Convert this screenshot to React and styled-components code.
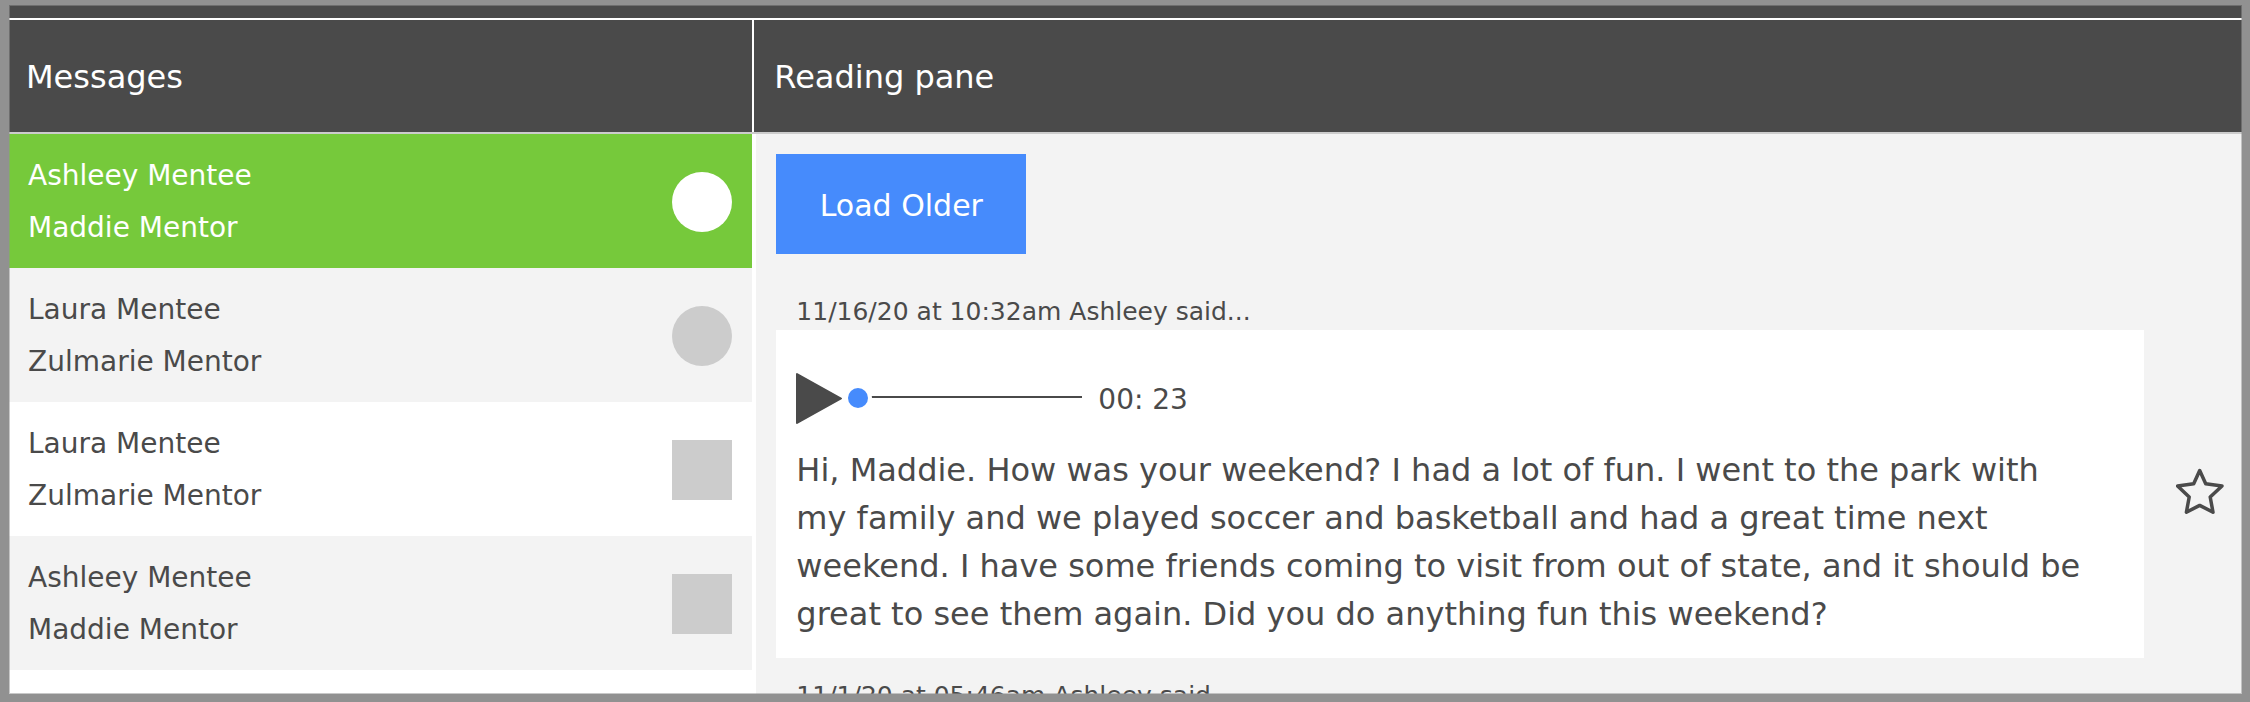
import React, { useState } from "react";
import styled, { createGlobalStyle, css } from "styled-components";

const ink = "#4a4a4a";
const blue = "#468bfc";
const green = "#76c93b";
const pale = "#f3f3f3";
const placeholder = "#cccccc";

const GlobalStyle = createGlobalStyle`
  *, *::before, *::after { box-sizing: border-box; }
  body {
    margin: 0;
    background: #919191;
    color: ${ink};
    font-family: Verdana, "DejaVu Sans", sans-serif;
  }
  button { font: inherit; color: inherit; border: 0; padding: 0; cursor: pointer; }
  h2, p, ul { margin: 0; padding: 0; }
`;

const Frame = styled.div`
  height: 100vh;
  padding: 5px 8px 8px 9px;
`;

const Window = styled.main`
  position: relative;
  height: 100%;
  display: flex;
  flex-direction: column;
  overflow: hidden;
  background: #ffffff;

  &::after {
    content: "";
    position: absolute;
    inset: 0;
    border: 1px solid rgba(145, 145, 145, 0.5);
    pointer-events: none;
  }
`;

const TopBar = styled.div`
  flex: none;
  height: 15px;
  background: ${ink};
  border-bottom: 2px solid #ffffff;
`;

const columns = css`
  display: grid;
  grid-template-columns: calc(100% / 3 + 1px) minmax(0, 1fr);
`;

const HeaderRow = styled.header`
  ${columns}
  flex: none;
  background: ${ink};
  border-bottom: 2px solid #cccccc;
`;

const PaneTitle = styled.h2`
  display: flex;
  align-items: center;
  height: 112px;
  padding-top: 2px;
  padding-left: ${(p) => (p.$divided ? 17 : 20)}px;
  border-right: ${(p) => (p.$divided ? "2px solid #ffffff" : "0")};
  color: #ffffff;
  font-size: 32px;
  font-weight: 400;
`;

const Body = styled.div`
  ${columns}
  flex: 1;
  min-height: 0;
`;

const ThreadList = styled.ul`
  list-style: none;
  overflow: hidden;
  border-right: 2px solid #ffffff;
`;

const ThreadItem = styled.li`
  background: #ffffff;
  &:nth-child(even) { background: ${pale}; }
`;

const ThreadButton = styled.button`
  display: flex;
  align-items: center;
  justify-content: space-between;
  width: 100%;
  padding: 16px 20px 14px 19px;
  background: ${(p) => (p.$active ? green : "transparent")};
  color: ${(p) => (p.$active ? "#ffffff" : ink)};
  text-align: left;
`;

const Names = styled.span`
  display: flex;
  flex-direction: column;
  font-size: 28px;
  line-height: 52px;
`;

const Avatar = styled.span`
  flex: none;
  width: 60px;
  height: 60px;
  border-radius: ${(p) => (p.$round ? "50%" : "0")};
  background: ${(p) => (p.$active ? "#ffffff" : placeholder)};
`;

const ReadingPane = styled.section`
  overflow: hidden;
  padding: 20px 0 0 20px;
  background: ${pale};
  border-left: 2px solid #ffffff;
`;

const LoadButton = styled.button`
  display: block;
  min-width: 250px;
  height: 100px;
  padding-top: 2px;
  margin-bottom: 40px;
  background: ${blue};
  color: #ffffff;
  font-size: 30px;
`;

const Message = styled.article`
  margin-bottom: 20px;
`;

const Meta = styled.p`
  padding-left: 20px;
  font-size: 25px;
  line-height: 36px;
`;

const MessageRow = styled.div`
  display: flex;
  align-items: center;
`;

const Card = styled.div`
  flex: 1;
  min-width: 0;
  padding: 42px 52px 20px 20px;
  background: #ffffff;
`;

const Player = styled.div`
  display: flex;
  align-items: center;
  margin-bottom: 22px;
`;

const PlayButton = styled.button`
  width: 48px;
  height: 52px;
  margin-right: 4px;
  background: none;
  svg { display: block; }
`;

const Seek = styled.input`
  appearance: none;
  width: 234px;
  height: 28px;
  margin: 0 16px 0 0;
  background: none;

  &::-webkit-slider-runnable-track {
    height: 20px;
    background: linear-gradient(${ink}, ${ink}) 0 8px / 100% 2px no-repeat;
  }
  &::-webkit-slider-thumb {
    appearance: none;
    width: 20px;
    height: 20px;
    border-radius: 50%;
    background: ${blue};
    box-shadow: 0 0 0 4px #ffffff;
  }
`;

const Duration = styled.span`
  padding-top: 2px;
  font-size: 28px;
`;

const MessageText = styled.p`
  font-size: 32px;
  line-height: 48px;
`;

const StarButton = styled.button`
  flex: none;
  width: 48px;
  height: 48px;
  margin: 0 18px 6px 32px;
  background: none;
  svg { display: block; }
`;

const threads = [
  { mentee: "Ashleey Mentee", mentor: "Maddie Mentor", round: true },
  { mentee: "Laura Mentee", mentor: "Zulmarie Mentor", round: true },
  { mentee: "Laura Mentee", mentor: "Zulmarie Mentor", round: false },
  { mentee: "Ashleey Mentee", mentor: "Maddie Mentor", round: false },
];

export default function App() {
  const [active, setActive] = useState(0);
  const [position, setPosition] = useState(0);

  return (
    <>
      <GlobalStyle />
      <Frame>
        <Window>
          <TopBar />
          <HeaderRow>
            <PaneTitle $divided>Messages</PaneTitle>
            <PaneTitle>Reading pane</PaneTitle>
          </HeaderRow>
          <Body>
            <ThreadList>
              {threads.map((t, i) => (
                <ThreadItem key={i}>
                  <ThreadButton $active={i === active} onClick={() => setActive(i)}>
                    <Names>
                      <span>{t.mentee}</span>
                      <span>{t.mentor}</span>
                    </Names>
                    <Avatar $round={t.round} $active={i === active} />
                  </ThreadButton>
                </ThreadItem>
              ))}
            </ThreadList>
            <ReadingPane>
              <LoadButton>Load Older</LoadButton>
              <Message>
                <Meta>11/16/20 at 10:32am Ashleey said...</Meta>
                <MessageRow>
                  <Card>
                    <Player>
                      <PlayButton aria-label="Play">
                        <svg width="48" height="52" viewBox="0 0 48 52">
                          <path
                            d="M1 2 L1 51 L45 26.5 Z"
                            fill={ink}
                            stroke={ink}
                            strokeWidth="2"
                            strokeLinejoin="round"
                          />
                        </svg>
                      </PlayButton>
                      <Seek
                        type="range"
                        min="0"
                        max="23"
                        value={position}
                        onChange={(e) => setPosition(Number(e.target.value))}
                        aria-label="Seek"
                      />
                      <Duration>00: 23</Duration>
                    </Player>
                    <MessageText>
                      Hi, Maddie. How was your weekend? I had a lot of fun. I went to the park with my
                      family and we played soccer and basketball and had a great time next weekend. I
                      have some friends coming to visit from out of state, and it should be great to see
                      them again. Did you do anything fun this weekend?
                    </MessageText>
                  </Card>
                  <StarButton aria-label="Star message">
                    <svg width="48" height="48" viewBox="0 0 48 48">
                      <path
                        d="M23.7 3.5 L29.7 16.7 L46 18.9 L34.2 30 L37 45.2 L23.7 38.4 L10.4 45.2 L13.2 30 L1.6 18.9 L17.7 16.7 Z"
                        fill="none"
                        stroke={ink}
                        strokeWidth="3.5"
                        strokeLinejoin="round"
                      />
                    </svg>
                  </StarButton>
                </MessageRow>
              </Message>
              <Message>
                <Meta>11/1/20 at 05:46am Ashleey said...</Meta>
              </Message>
            </ReadingPane>
          </Body>
        </Window>
      </Frame>
    </>
  );
}
